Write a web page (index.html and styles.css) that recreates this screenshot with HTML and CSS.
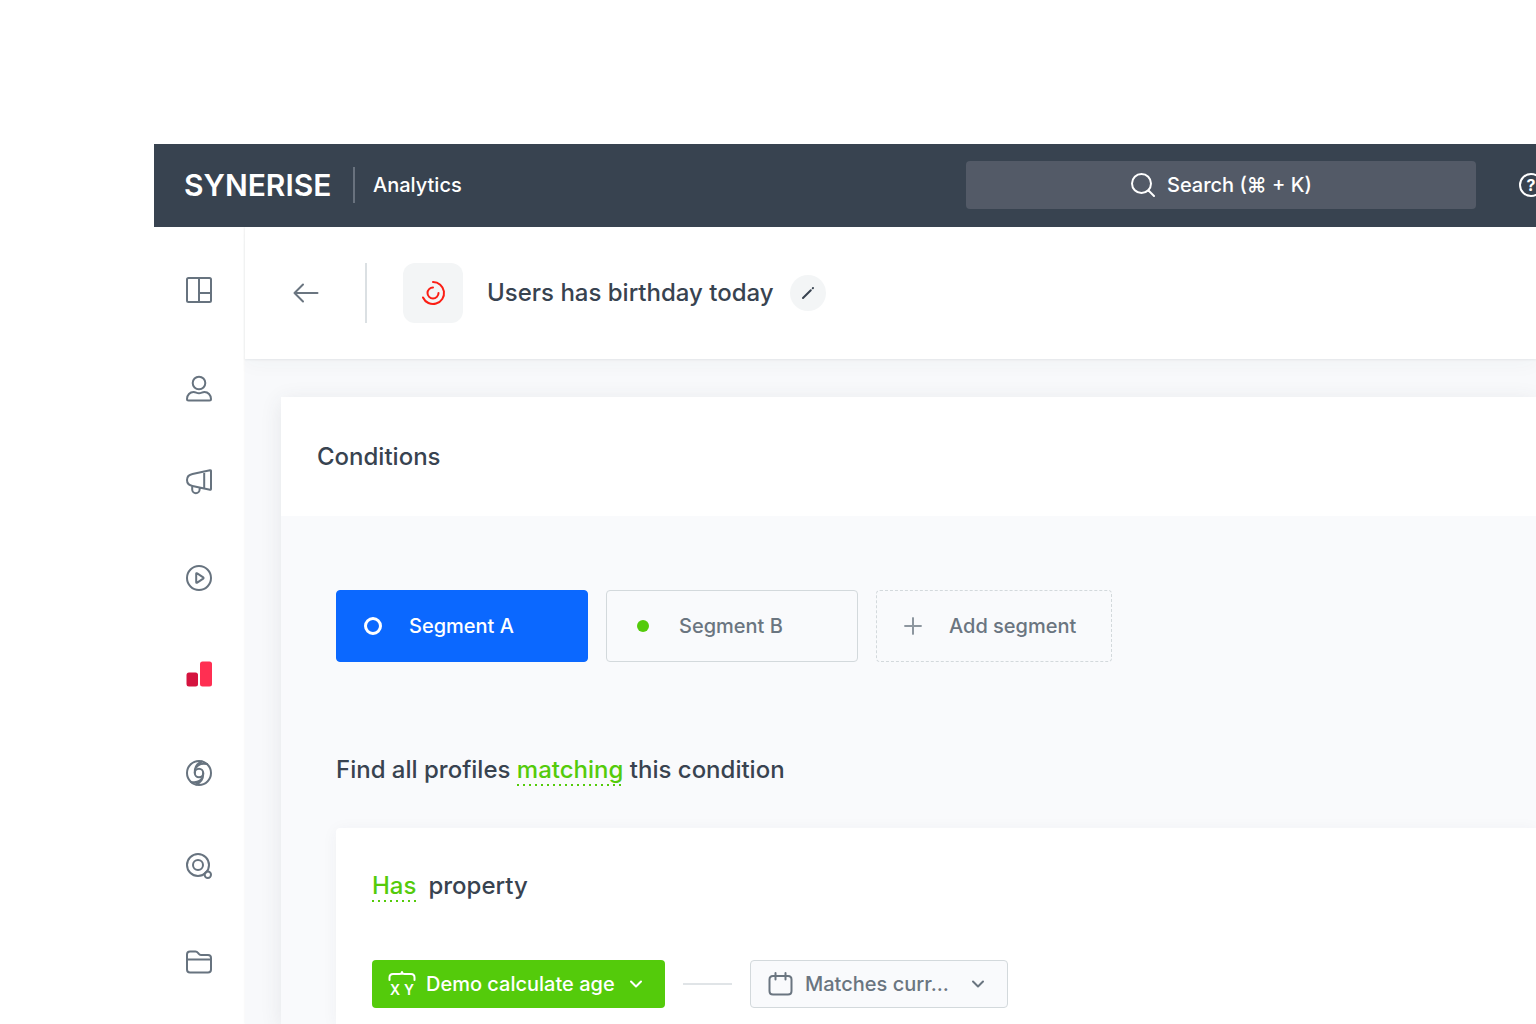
FILE: index.html
```html
<!DOCTYPE html>
<html lang="en">

<head>
  <meta charset="UTF-8">
  <meta name="viewport" content="width=device-width, initial-scale=1.0">
  <title>Synerise - Analytics</title>
  <link rel="stylesheet" href="styles.css">
</head>

<body>
  <div class="app">
    <header class="topbar">
      <a class="logo" href="#">SYNERISE</a>
      <span class="module">Analytics</span>
      <label class="search">
        <svg class="search-icon" viewBox="0 0 24 24" aria-hidden="true">
          <circle cx="10.5" cy="10.5" r="9.5" />
          <path d="M17.5 17.5L23 23" />
        </svg>
        <input type="text" placeholder="Search (⌘ + K)" aria-label="Search">
      </label>
      <button class="help" type="button" aria-label="Help">
        <svg viewBox="0 0 24 24" aria-hidden="true">
          <circle cx="12" cy="12" r="11" />
          <text x="12" y="18" text-anchor="middle">?</text>
        </svg>
      </button>
    </header>

    <div class="layout">
      <!-- main menu -->
      <nav class="sidebar">
        <a href="#" aria-label="Dashboards">
          <svg viewBox="0 0 32 32">
            <rect x="4" y="4" width="24" height="24" rx="1.5" />
            <path d="M16 4v24M16 19h12" />
          </svg>
        </a>
        <a href="#" aria-label="Profiles">
          <svg viewBox="0 0 32 32">
            <circle cx="16" cy="13" r="6.3" />
            <path d="M5.500 30.500h21c1 0 1.500-.5 1.500-1.500 0-4-3-7-6.500-7-2.500 0-3 1.200-5.500 1.200S13 22 10.500 22C7 22 4 25 4 29c0 1 .5 1.500 1.500 1.500z" />
          </svg>
        </a>
        <a href="#" aria-label="Communication">
          <svg viewBox="0 0 32 32">
            <path d="M27 4.200L9.500 8C6 8.700 4 11 4 14s2 5.300 5.500 6L27 23.800c.6.100 1-.2 1-.8V5c0-.6-.4-.9-1-.8zM21.200 5.500v17M9.200 20v3.500a3.700 3.700 0 0 0 7.400 0v-2" />
          </svg>
        </a>
        <a href="#" aria-label="Automation">
          <svg viewBox="0 0 32 32">
            <circle cx="16" cy="16" r="12" />
            <path d="M13.200 11.800v8.400c0 .6.500.8 1 .5l6-4c.5-.4.5-1 0-1.400l-6-4c-.5-.3-1-.1-1 .5z" />
          </svg>
        </a>
        <a href="#" aria-label="Analytics">
          <svg viewBox="0 0 32 32">
            <rect class="bar-dark" x="3.500" y="14.500" width="11.500" height="14" rx="2.500" />
            <rect class="bar-light" x="17" y="3.500" width="12" height="25" rx="2.500" />
          </svg>
        </a>
        <a href="#" aria-label="AI Hub">
          <svg viewBox="0 0 32 32">
            <circle cx="16" cy="19" r="12" />
            <circle cx="16" cy="19" r="4.200" />
            <path d="M24 10c-7-1.500-12.500 2-12.200 9M20.200 19c.3 5-2 9.500-7.200 11.500M8 28c7 1.500 12.500-2 12.200-9M11.800 19c-.3-5 2-9.500 7.200-11.500" />
          </svg>
        </a>
        <a href="#" aria-label="Search">
          <svg viewBox="0 0 32 32">
            <circle cx="15" cy="15" r="11" />
            <circle cx="15" cy="15" r="5" />
            <circle cx="24.800" cy="24.800" r="3.200" />
          </svg>
        </a>
        <a href="#" aria-label="Assets">
          <svg viewBox="0 0 32 32">
            <path d="M4 8.500C4 6.500 5 5.500 7 5.500h5.500c1.500 0 2 .8 3 2 .8 1.200 1.300 1.500 2.500 1.500h7c2 0 3 1 3 3v11.500c0 2-1 3-3 3H7c-2 0-3-1-3-3zM4 13.500h24" />
          </svg>
        </a>
      </nav>

      <main class="main">
        <div class="titlebar">
          <a class="back" href="#" aria-label="Back">
            <svg viewBox="0 0 26 20" aria-hidden="true">
              <path d="M10 1.500L1.500 10l8.500 8.500M1.500 10H24.500" />
            </svg>
          </a>
          <span class="tile">
            <svg viewBox="0 0 26 26" aria-hidden="true">
              <path d="M13 2a11 11 0 1 1-10 15.500" />
              <path d="M13 7.500a5.500 5.500 0 1 0 5.500 5.500" />
            </svg>
          </span>
          <h1>Users has birthday today</h1>
          <button class="edit" type="button" aria-label="Edit name">
            <svg viewBox="0 0 14 14" aria-hidden="true">
              <path d="M2 12l7.800-7.800M11.800 2.200l.2-.2" />
            </svg>
          </button>
        </div>

        <section class="card">
          <h2 class="card-title">Conditions</h2>
          <div class="card-body">
            <div class="segments">
              <button class="segment active" type="button"><i class="mark ring"></i>Segment A</button>
              <button class="segment" type="button"><i class="mark dot"></i>Segment B</button>
              <button class="segment add" type="button">
                <svg class="mark" viewBox="0 0 18 18" aria-hidden="true">
                  <path d="M9 1v16M1 9h16" />
                </svg>Add segment
              </button>
            </div>

            <p class="sentence">Find all profiles <button class="pick" type="button">matching</button> this condition</p>

            <div class="condition">
              <p class="sentence"><button class="pick has" type="button">Has</button>property</p>
              <div class="rule">
                <label class="dropdown green">
                  <svg class="icon" viewBox="0 0 28 28" aria-hidden="true">
                    <path d="M1.500 10V7.500c0-2 1-3.500 3.500-3.500h6.500c1.500 0 2.500-.5 2.500-2 0 1.500 1 2 2.500 2H23c2.500 0 3.500 1.500 3.500 3.500V10" />
                    <text x="7" y="25" text-anchor="middle">X</text>
                    <text x="21" y="25" text-anchor="middle">Y</text>
                  </svg>
                  <select aria-label="Property">
                    <option>Demo calculate age</option>
                  </select>
                  <svg class="chevron" viewBox="0 0 14 8" aria-hidden="true">
                    <path d="M2 1.500l5 5 5-5" />
                  </svg>
                </label>
                <span class="line"></span>
                <label class="dropdown light">
                  <svg class="icon" viewBox="0 0 28 28" aria-hidden="true">
                    <path d="M6 6h15c2.500 0 3.500 1 3.500 3.500V21c0 2.500-1 3.500-3.500 3.500H6c-2.500 0-3.500-1-3.500-3.500V9.500C2.500 7 3.500 6 6 6zM8.500 3v6.500M18.500 3v6.500" />
                  </svg>
                  <select aria-label="Operator">
                    <option>Matches curr...</option>
                  </select>
                  <svg class="chevron" viewBox="0 0 14 8" aria-hidden="true">
                    <path d="M2 1.500l5 5 5-5" />
                  </svg>
                </label>
              </div>
            </div>
          </div>
        </section>
      </main>
    </div>
  </div>
</body>

</html>
```
FILE: styles.css
```css
* {
  margin: 0;
  padding: 0;
  box-sizing: border-box;
}

body {
  background-color: #fff;
  color: #384350;
  font-family: Inter, "Liberation Sans", sans-serif;
  font-size: 20px;
  font-weight: 500;
  line-height: 24px;
}

a {
  color: inherit;
  text-decoration: none;
}

button,
input,
select {
  border: 0;
  background: none;
  color: inherit;
  font: inherit;
}

button {
  cursor: pointer;
}

svg {
  display: block;
  flex: none;
  fill: none;
  stroke: currentColor;
  stroke-width: 2;
  stroke-linecap: round;
  stroke-linejoin: round;
}

svg text {
  fill: currentColor;
  stroke: none;
}

.app {
  display: flex;
  flex-direction: column;
  min-height: 100vh;
  padding: 144px 0 0 154px;
  overflow: hidden;
}

/* top bar */
.topbar {
  display: flex;
  align-items: center;
  height: 83px;
  padding: 0 0 1px 30px;
  background-color: #384350;
  color: #fff;
}

.logo {
  width: 171px;
  font-size: 30px;
  font-weight: 600;
  line-height: 36px;
  border-right: 2px solid #69727e;
}

.module {
  margin-left: 18px;
}

.search {
  display: flex;
  align-items: center;
  justify-content: center;
  gap: 12px;
  width: 510px;
  height: 48px;
  margin-left: auto;
  border-radius: 4px;
  background-color: #535a67;
}

.search-icon {
  width: 24px;
  height: 24px;
}

.search input {
  width: 144px;
  outline: none;
}

.search input::placeholder {
  color: #fff;
  opacity: 1;
}

/* the help button runs over the right edge */
.help {
  margin: 0 -7px 0 43px;
}

.help svg {
  width: 24px;
  height: 24px;
}

.help text {
  font-size: 16px;
  font-weight: 700;
}

.layout {
  display: flex;
  flex: 1;
}

/* side menu */
.sidebar {
  flex: none;
  width: 91px;
  padding: 15px 1px 0 0;
  color: #67737f;
}

.sidebar a {
  display: flex;
  align-items: center;
  justify-content: center;
  height: 96px;
}

.sidebar svg {
  width: 32px;
  height: 32px;
}

.bar-dark {
  fill: #d5143f;
  stroke: none;
}

.bar-light {
  fill: #ff2f52;
  stroke: none;
}

.main {
  display: flex;
  flex: 1;
  flex-direction: column;
  min-width: 0;
  background-color: #f8f9fb;
  box-shadow: 0 0 2px rgba(56, 67, 80, 0.08);
  clip-path: inset(0 0 0 -2px);
}

.titlebar {
  display: flex;
  align-items: center;
  height: 132px;
  padding-left: 48px;
  background-color: #fff;
  box-shadow: 0 1px 2px rgba(56, 67, 80, 0.08), 0 4px 20px rgba(56, 67, 80, 0.04);
}

.back {
  display: flex;
  align-items: center;
  width: 74px;
  height: 60px;
  border-right: 2px solid #dbe0e3;
  color: #6a7580;
}

.back svg {
  width: 26px;
  height: 20px;
}

.tile {
  display: flex;
  align-items: center;
  justify-content: center;
  width: 60px;
  height: 60px;
  margin: 0 24px 0 36px;
  border-radius: 12px;
  background-color: #f3f5f6;
  color: #fb1e14;
}

.tile svg {
  width: 26px;
  height: 26px;
}

h1,
h2,
.sentence {
  font-size: 24px;
  font-weight: 500;
  line-height: 32px;
}

.edit {
  display: flex;
  align-items: center;
  justify-content: center;
  width: 36px;
  height: 36px;
  margin-left: 16px;
  border-radius: 50%;
  background-color: #f3f5f6;
}

.edit svg {
  width: 14px;
  height: 14px;
}

/* conditions */
.card {
  display: flex;
  flex: 1;
  flex-direction: column;
  margin: 38px 0 0 36px;
  background-color: #fff;
  box-shadow: 0 4px 20px rgba(56, 67, 80, 0.1);
}

.card-title {
  padding: 44px 36px 43px;
}

.card-body {
  display: flex;
  flex: 1;
  flex-direction: column;
  padding: 74px 0 0 55px;
  background-color: #f9fafc;
}

.segments {
  display: flex;
  gap: 18px;
  margin-bottom: 92px;
}

.segment {
  display: flex;
  align-items: center;
  gap: 27px;
  width: 252px;
  height: 72px;
  padding-left: 27px;
  border: 1px solid #d3d9dc;
  border-radius: 4px;
  color: #6a7580;
}

.segment.active {
  border-color: #0b68ff;
  background-color: #0b68ff;
  color: #fff;
}

.segment.add {
  width: 236px;
  border-style: dashed;
}

.mark {
  width: 18px;
  height: 18px;
  border-radius: 50%;
}

.ring {
  border: 3px solid #fff;
}

.dot {
  border: 3px solid transparent;
  background-color: #54cb0b;
  background-clip: padding-box;
}

.add .mark {
  color: #8d969f;
}

.pick {
  background: linear-gradient(90deg, #54cb0b 2px, transparent 2px) left bottom / 6px 2px repeat-x;
  color: #54cb0b;
}

.has {
  margin-right: 12px;
}

.condition {
  flex: 1;
  margin-top: 42px;
  padding: 42px 36px 16px;
  border-top-left-radius: 4px;
  background-color: #fff;
  box-shadow: 0 2px 16px rgba(56, 67, 80, 0.05);
}

.rule {
  display: flex;
  align-items: center;
  gap: 18px;
  margin-top: 58px;
}

.line {
  width: 49px;
  height: 2px;
  background-color: #e0e4e7;
}

.dropdown {
  display: flex;
  align-items: center;
  height: 48px;
  padding: 0 22px 0 16px;
  border-radius: 4px;
}

.dropdown select {
  flex: 1;
  min-width: 0;
  margin-left: 10px;
  appearance: none;
  outline: none;
}

.dropdown .icon {
  width: 28px;
  height: 28px;
}

.dropdown text {
  font-size: 14px;
  font-weight: 600;
}

.chevron {
  width: 14px;
  height: 8px;
}

.green {
  width: 293px;
  background-color: #54cb0b;
  color: #fff;
}

.light {
  width: 258px;
  border: 1px solid #d3d9dc;
  background-color: #f9fafc;
  color: #6a7580;
}
```
